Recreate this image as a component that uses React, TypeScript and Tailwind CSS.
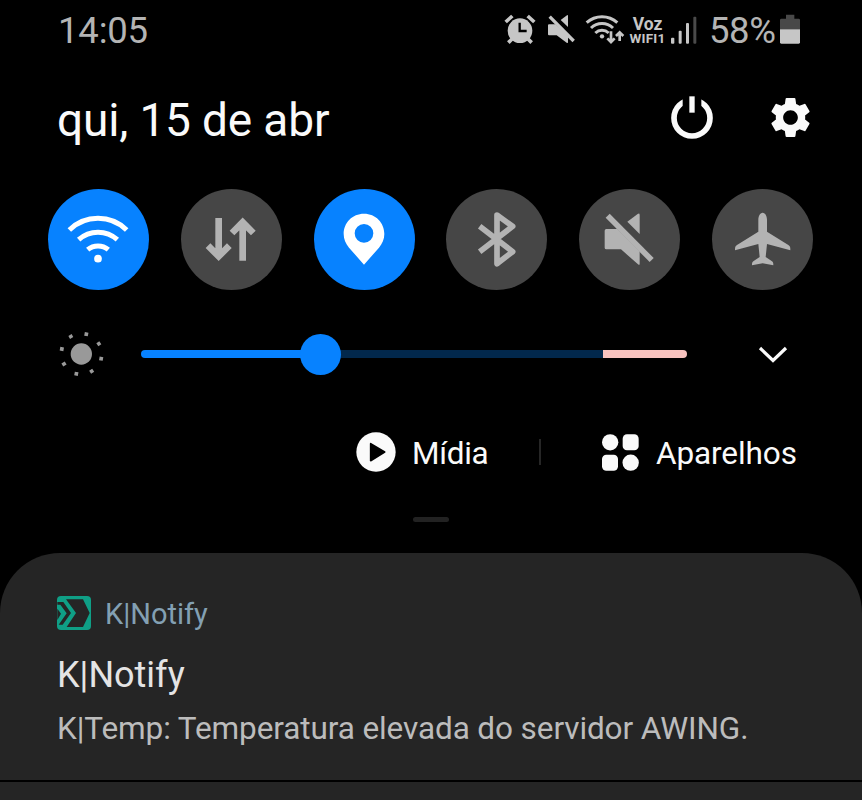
import React from 'react';
import { MdSettings } from 'react-icons/md';

interface QuickToggle {
  name: string;
  active: boolean;
  icon: React.ReactNode;
}

const toggles: QuickToggle[] = [
  {
    name: 'wifi',
    active: true,
    icon: (
      <>
        <g fill="none" stroke="currentColor" strokeWidth="15">
          <path d="M64 123 A123 123 0 0 1 236 123" />
          <path d="M92 152 A86 86 0 0 1 208 152" />
          <path d="M119 182 A48 48 0 0 1 181 182" />
        </g>
        <circle cx="150" cy="209" r="11.5" fill="currentColor" />
      </>
    ),
  },
  {
    name: 'data',
    active: false,
    icon: (
      <g fill="none" stroke="currentColor" strokeWidth="20">
        <path d="M113 87 V204 M81 170 L113 202 L145 170" />
        <path d="M185 215 V98 M153 132 L185 100 L217 132" />
      </g>
    ),
  },
  {
    name: 'location',
    active: true,
    icon: (
      <path
        fill="currentColor"
        fillRule="evenodd"
        d="M150 74 C115 74 89 101 89 135 C89 151 95 164 105 176 L150 227 L195 176 C205 164 211 151 211 135 C211 101 185 74 150 74 Z M150 105 A28 28 0 1 1 150 161 A28 28 0 1 1 150 105 Z"
      />
    ),
  },
  {
    name: 'bluetooth',
    active: false,
    icon: (
      <path
        fill="none"
        stroke="currentColor"
        strokeWidth="17"
        strokeLinejoin="round"
        d="M101 112 L200 188 L153 224 V78 L200 112 L101 188"
      />
    ),
  },
  {
    name: 'mute',
    active: false,
    icon: (
      <>
        <path
          fill="currentColor"
          d="M115 120 H82 Q77 120 77 125 V176 Q77 181 82 181 H126 L177 226 Q182 230 182 224 V187 Z"
        />
        <path fill="currentColor" d="M145 98 L176 75 Q182 71 182 78 V135 Z" />
        <path stroke="currentColor" strokeWidth="17" d="M86 80 L218 213" />
      </>
    ),
  },
  {
    name: 'airplane',
    active: false,
    icon: (
      <path
        fill="currentColor"
        d="M152 71 C144 71 139 82 139 92 V128 L75 168 C69 172 69 175 69 184 L139 165 L143 204 L124 217 C120 220 120 223 120 229 L152 223 L184 229 C184 223 184 220 180 217 L161 204 L165 165 L235 184 C235 175 235 172 229 168 L165 128 V92 C165 82 160 71 152 71 Z"
      />
    ),
  },
];

const StatusBar: React.FC = () => (
  <div className="flex h-[61px] items-center pl-[58px] pr-[61px]">
    <span className="pt-[2px] text-[36.5px] leading-none tracking-[-0.2px] text-[#b4b4b4]">14:05</span>

    <div className="ml-auto flex items-center text-[#c6c6c6]">
      {/* Alarm */}
      <svg className="h-9 w-8" viewBox="42 37 96 108">
        <circle cx="90" cy="90" r="37" fill="currentColor" />
        <g fill="none" stroke="currentColor" strokeWidth="11">
          <path d="M47 64 L67 46 M113 46 L133 64" />
          <path d="M55 126 L66 115 M114 115 L125 126" />
        </g>
        <path d="M89 66 V91 H110" fill="none" stroke="#000" strokeWidth="7" />
      </svg>

      {/* Muted speaker */}
      <svg className="ml-[10px] h-9 w-[30px]" viewBox="168 37 90 108">
        <path fill="currentColor" d="M196 71 H177 Q174 71 174 74 V101 Q174 104 177 104 H200 L231 127 Q234 128 234 125 V105 Z" />
        <path fill="currentColor" d="M212 58 L231 44 Q234 42 234 46 V79 Z" />
        <path stroke="currentColor" strokeWidth="10" d="M179 48 L251 121" />
      </svg>

      {/* Wi-Fi with traffic arrows */}
      <svg className="ml-2 h-9 w-[41px]" viewBox="282 37 123 108">
        <g fill="none" stroke="currentColor" strokeWidth="9">
          <path d="M290 66 A68 68 0 0 1 382 66" />
          <path d="M303 82 A48 48 0 0 1 369 82" />
          <path d="M316 97 A29 29 0 0 1 356 97" />
          <path strokeWidth="8" d="M363 92 V123 M352 113 L363 124 L374 113" />
          <path strokeWidth="8" d="M389 121 V96 M378 106 L389 95 L400 106" />
        </g>
        <circle cx="336" cy="107" r="6.5" fill="currentColor" />
      </svg>

      <div className="ml-[4px] flex w-[37px] flex-col items-center font-bold">
        <span className="text-[17.5px] leading-[14px]">Voz</span>
        <span className="text-[13.5px] leading-[14px] tracking-[0.2px]">WIFI1</span>
      </div>

      {/* Signal */}
      <svg className="ml-[4px] h-9 w-7" viewBox="540 37 84 108">
        <g fill="currentColor">
          <rect x="543" y="111" width="10" height="18" rx="3" />
          <rect x="566" y="90" width="9" height="39" rx="3" />
          <rect x="588" y="67" width="9" height="62" rx="3" />
          <rect x="610" y="48" width="9" height="81" rx="3" fill="#4a4a4a" />
        </g>
      </svg>

      <span className="ml-[11px] w-[71px] whitespace-nowrap pt-[2px] text-[36.5px] leading-none tracking-[-0.4px] text-[#b4b4b4]">
        58%
      </span>

      {/* Battery */}
      <svg className="h-9 w-[21px]" viewBox="870 37 63 108">
        <path fill="#484848" d="M888 42 H913 V54 H926 Q930 54 930 58 V86 H870 V58 Q870 54 874 54 H888 Z" />
        <path fill="currentColor" d="M870 86 H930 V125 Q930 129 926 129 H874 Q870 129 870 125 Z" />
      </svg>
    </div>
  </div>
);

const PanelHeader: React.FC = () => (
  <div className="flex h-[113px] items-center pl-[57px] pr-[47px]">
    <h1 className="pt-[4px] text-[46px] leading-none tracking-[-0.15px] text-[#fafafa]">qui, 15 de abr</h1>
    <div className="ml-auto flex items-center gap-[52px]">
      {/* Power */}
      <svg className="h-[44px] w-[44px]" viewBox="60 47 132 132">
        <circle cx="126" cy="113" r="54" fill="none" stroke="#fafafa" strokeWidth="17" />
        <path fill="#000" d="M98 45 H154 V85 H98 Z" />
        <path fill="#fafafa" d="M118 48 H134 V97 H118 Z" />
      </svg>
      <MdSettings className="h-[49px] w-[49px] text-[#fafafa]" />
    </div>
  </div>
);

const Toggles: React.FC = () => (
  <div className="flex h-[131px] items-center justify-between pl-12 pr-[49px]">
    {toggles.map((toggle) => (
      <button
        key={toggle.name}
        className={`h-[101px] w-[101px] rounded-full ${
          toggle.active ? 'bg-[#0782ff] text-white' : 'bg-[#464646] text-[#b3b3b3]'
        }`}
      >
        <svg className="h-full w-full" viewBox="0 0 303 303">
          {toggle.icon}
        </svg>
      </button>
    ))}
  </div>
);

const Brightness: React.FC = () => (
  <div className="flex h-[98px] items-center pl-[58px] pr-[74px]">
    {/* Sun */}
    <svg className="h-[46px] w-[46px]" viewBox="54 34 138 138">
      <circle cx="124" cy="103" r="32" fill="#999" />
      <g stroke="#999" strokeWidth="11">
        <path d="M90 46 L95 55 M140 38 L138 49 M181 69 L172 75 M178 116 L189 118" />
        <path d="M152 150 L158 159 M110 157 L108 168 M67 136 L77 130 M60 87 L71 89" />
      </g>
    </svg>

    <div className="relative ml-[37px] flex h-2 w-[546px]">
      <div className="w-[180px] rounded-l-full bg-[#0782ff]" />
      <div className="w-[282px] bg-[#02284c]" />
      <div className="flex-1 rounded-r-full bg-[#f8c3bf]" />
      <div className="absolute -top-[16px] left-[159px] h-[41px] w-[41px] rounded-full bg-[#0782ff]" />
    </div>

    <svg className="ml-auto h-5 w-[30px]" viewBox="0 0 30 20" fill="none">
      <path d="M2 4 L15 16.5 L28 4" stroke="#fafafa" strokeWidth="3.2" />
    </svg>
  </div>
);

const MediaRow: React.FC = () => (
  <div className="flex h-[98px] items-center pl-[356px] text-[31.5px] leading-none text-[#fafafa]">
    <svg className="h-10 w-10" viewBox="0 0 120 120">
      <circle cx="60" cy="60" r="59" fill="#fafafa" />
      <path d="M44 35 L86 60 L44 86 Z" fill="#000" stroke="#000" strokeWidth="5" strokeLinejoin="round" />
    </svg>
    <span className="ml-[16px] w-[127px] pt-[4px] tracking-[-0.3px]">Mídia</span>
    <div className="h-[26px] w-[2px] bg-[#262626]" />
    <svg className="ml-[61px] h-[37px] w-[37px]" viewBox="0 0 111 111" fill="#fafafa">
      <circle cx="24.5" cy="25" r="24.5" />
      <rect x="62" y="1" width="48" height="48" rx="13" />
      <rect x="0" y="62" width="48" height="48" rx="13" />
      <circle cx="86" cy="86" r="24.5" />
    </svg>
    <span className="ml-[17px] pt-[4px] tracking-[-0.1px]">Aparelhos</span>
  </div>
);

const Notification: React.FC = () => (
  <div className="h-[227px] rounded-t-[60px] bg-[#252525] pl-[57px] pt-[43px]">
    <div className="flex h-[34px] items-center">
      <svg className="h-[34px] w-[34px]" viewBox="0 0 102 102">
        <rect width="102" height="102" rx="12" fill="#0f9f86" />
        <g fill="#252525">
          <path d="M27 10 H78 L98 51 L78 93 H29 L57 51 Z" />
          <path d="M1 18 H19 L42 51 L17 86 H5 L29 52 L10 26 H1 Z" />
          <path d="M1 38 L12 53 L1 72 Z" />
        </g>
      </svg>
      <span className="ml-[14px] pt-[3px] text-[29px] leading-none text-[#83a0b3]">K|Notify</span>
    </div>
    <h2 className="mt-[27px] text-[36px] leading-[36px] text-[#e4e4e4]">K|Notify</h2>
    <p className="mt-[20px] text-[31.5px] leading-[32px] tracking-[-0.1px] text-[#bcbcbc]">
      K|Temp: Temperatura elevada do servidor AWING.
    </p>
  </div>
);

export default function App() {
  return (
    <div className="h-[800px] w-[862px] overflow-hidden bg-black font-['Roboto',sans-serif]">
      <StatusBar />
      <PanelHeader />
      <Toggles />
      <Brightness />
      <MediaRow />

      {/* Drag handle */}
      <div className="flex h-[52px] justify-center pt-4">
        <div className="h-[5px] w-9 rounded-full bg-[#222]" />
      </div>

      <Notification />
      <div className="mt-[2px] h-[18px] bg-[#252525]" />
    </div>
  );
}
